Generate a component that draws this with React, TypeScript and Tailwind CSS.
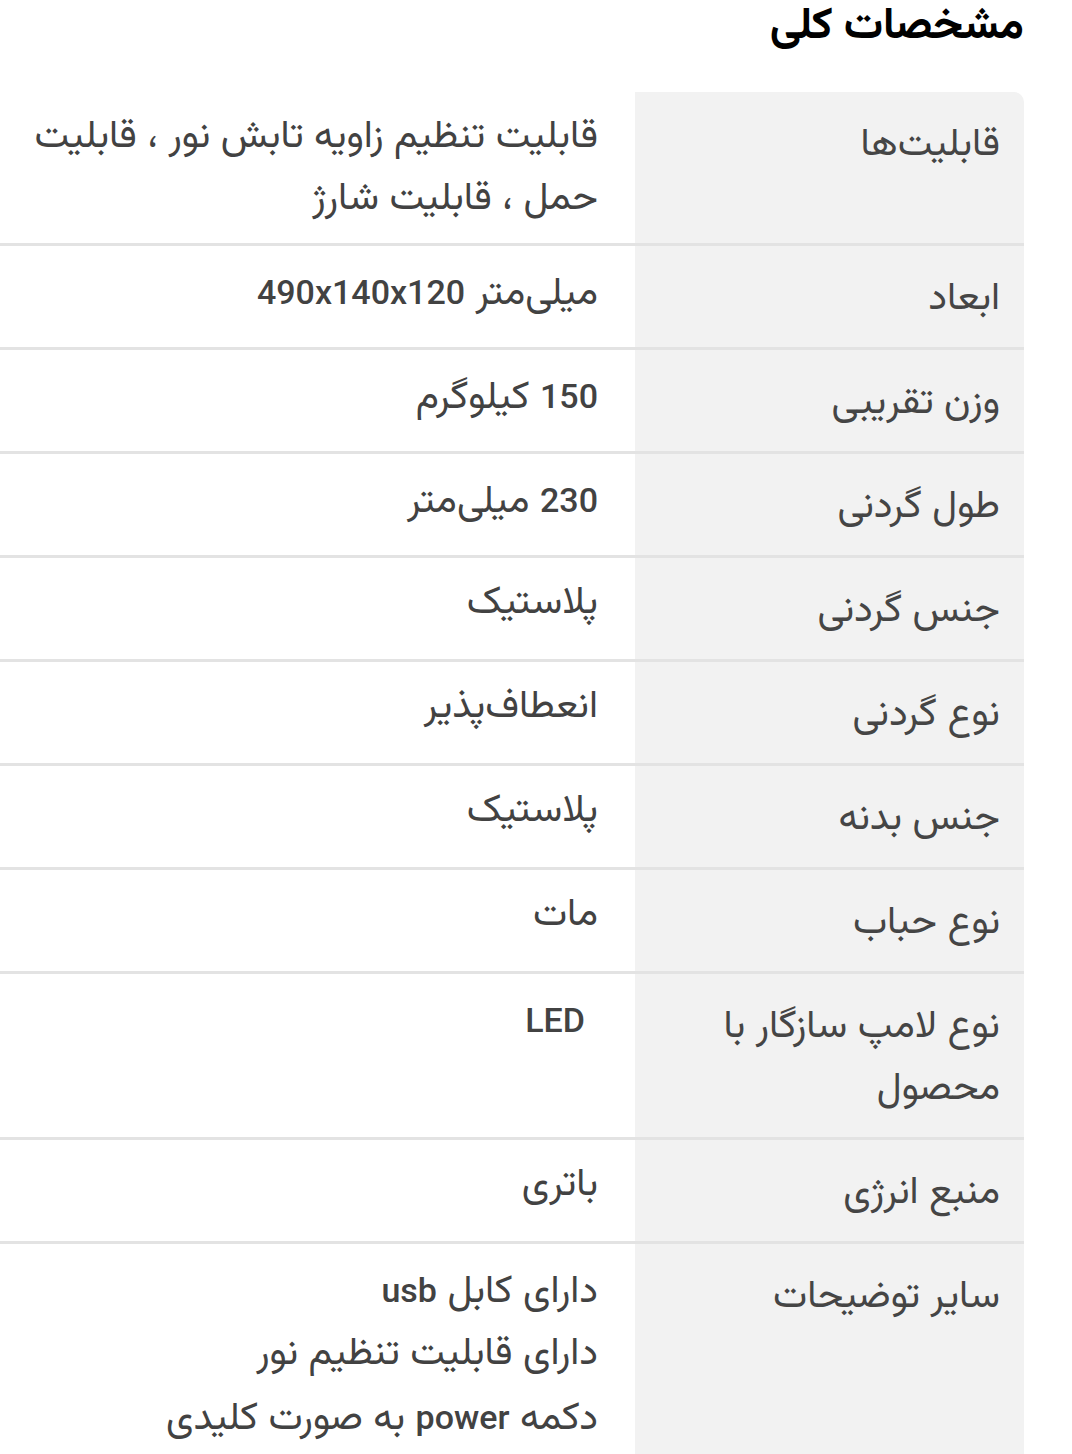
import React from "react";

type Row = { label: string[]; value: string[] };

const rows: Row[] = [
  {
    label: ["قابلیت‌ها"],
    value: ["قابلیت تنظیم زاویه تابش نور ، قابلیت", "حمل ، قابلیت شارژ"],
  },
  { label: ["ابعاد"], value: ["میلی‌متر 490x140x120"] },
  { label: ["وزن تقریبی"], value: ["150 کیلوگرم"] },
  { label: ["طول گردنی"], value: ["230 میلی‌متر"] },
  { label: ["جنس گردنی"], value: ["پلاستیک"] },
  { label: ["نوع گردنی"], value: ["انعطاف‌پذیر"] },
  { label: ["جنس بدنه"], value: ["پلاستیک"] },
  { label: ["نوع حباب"], value: ["مات"] },
  { label: ["نوع لامپ سازگار با", "محصول"], value: ["LED"] },
  { label: ["منبع انرژی"], value: ["باتری"] },
  {
    label: ["سایر توضیحات"],
    value: ["دارای کابل usb", "دارای قابلیت تنظیم نور", "دکمه power به صورت کلیدی"],
  },
];

function Mixed({ text }: { text: string }) {
  const parts = text.split(/([A-Za-z0-9]+)/);
  return (
    <>
      {parts.map((p, i) =>
        /^[A-Za-z0-9]+$/.test(p) ? (
          <span
            key={i}
            className={"text-[34px] font-medium " + (p === "LED" ? "mr-[13px]" : "")}
            style={{ fontFamily: "Roboto, sans-serif" }}
          >
            {p}
          </span>
        ) : (
          <React.Fragment key={i}>{p}</React.Fragment>
        )
      )}
    </>
  );
}

export default function App() {
  return (
    <div
      dir="rtl"
      className="w-[1072px] h-[1454px] overflow-hidden bg-white pr-[48px]"
      style={{
        fontFamily:
          'Vazirmatn, Vazir, "Noto Sans Arabic", "DejaVu Sans", sans-serif',
      }}
    >
      <h1 className="text-[44px] leading-[56px] font-bold text-black mb-[36px]">
        مشخصات کلی
      </h1>
      <div className="w-[1024px]">
        {rows.map((r, i) => (
          <div
            key={i}
            className={
              "flex " + (i > 0 ? "border-t-[3px] border-[#e3e3e3]" : "")
            }
          >
            <div
              className={
                "w-[389px] shrink-0 bg-[#f2f2f2] pr-[24px] pt-[23px] pb-[16px] text-[39px] leading-[62px] text-[#454545] " +
                (i === 0 ? "rounded-tr-[10px]" : "")
              }
            >
              {r.label.map((l, j) => (
                <div key={j}>{l}</div>
              ))}
            </div>
            <div className="flex-1 pr-[37px] pt-[15px] pb-[12px] text-[39px] leading-[62px] text-[#424242]">
              {r.value.map((v, j) => (
                <div key={j}>
                  <Mixed text={v} />
                </div>
              ))}
            </div>
          </div>
        ))}
      </div>
    </div>
  );
}
